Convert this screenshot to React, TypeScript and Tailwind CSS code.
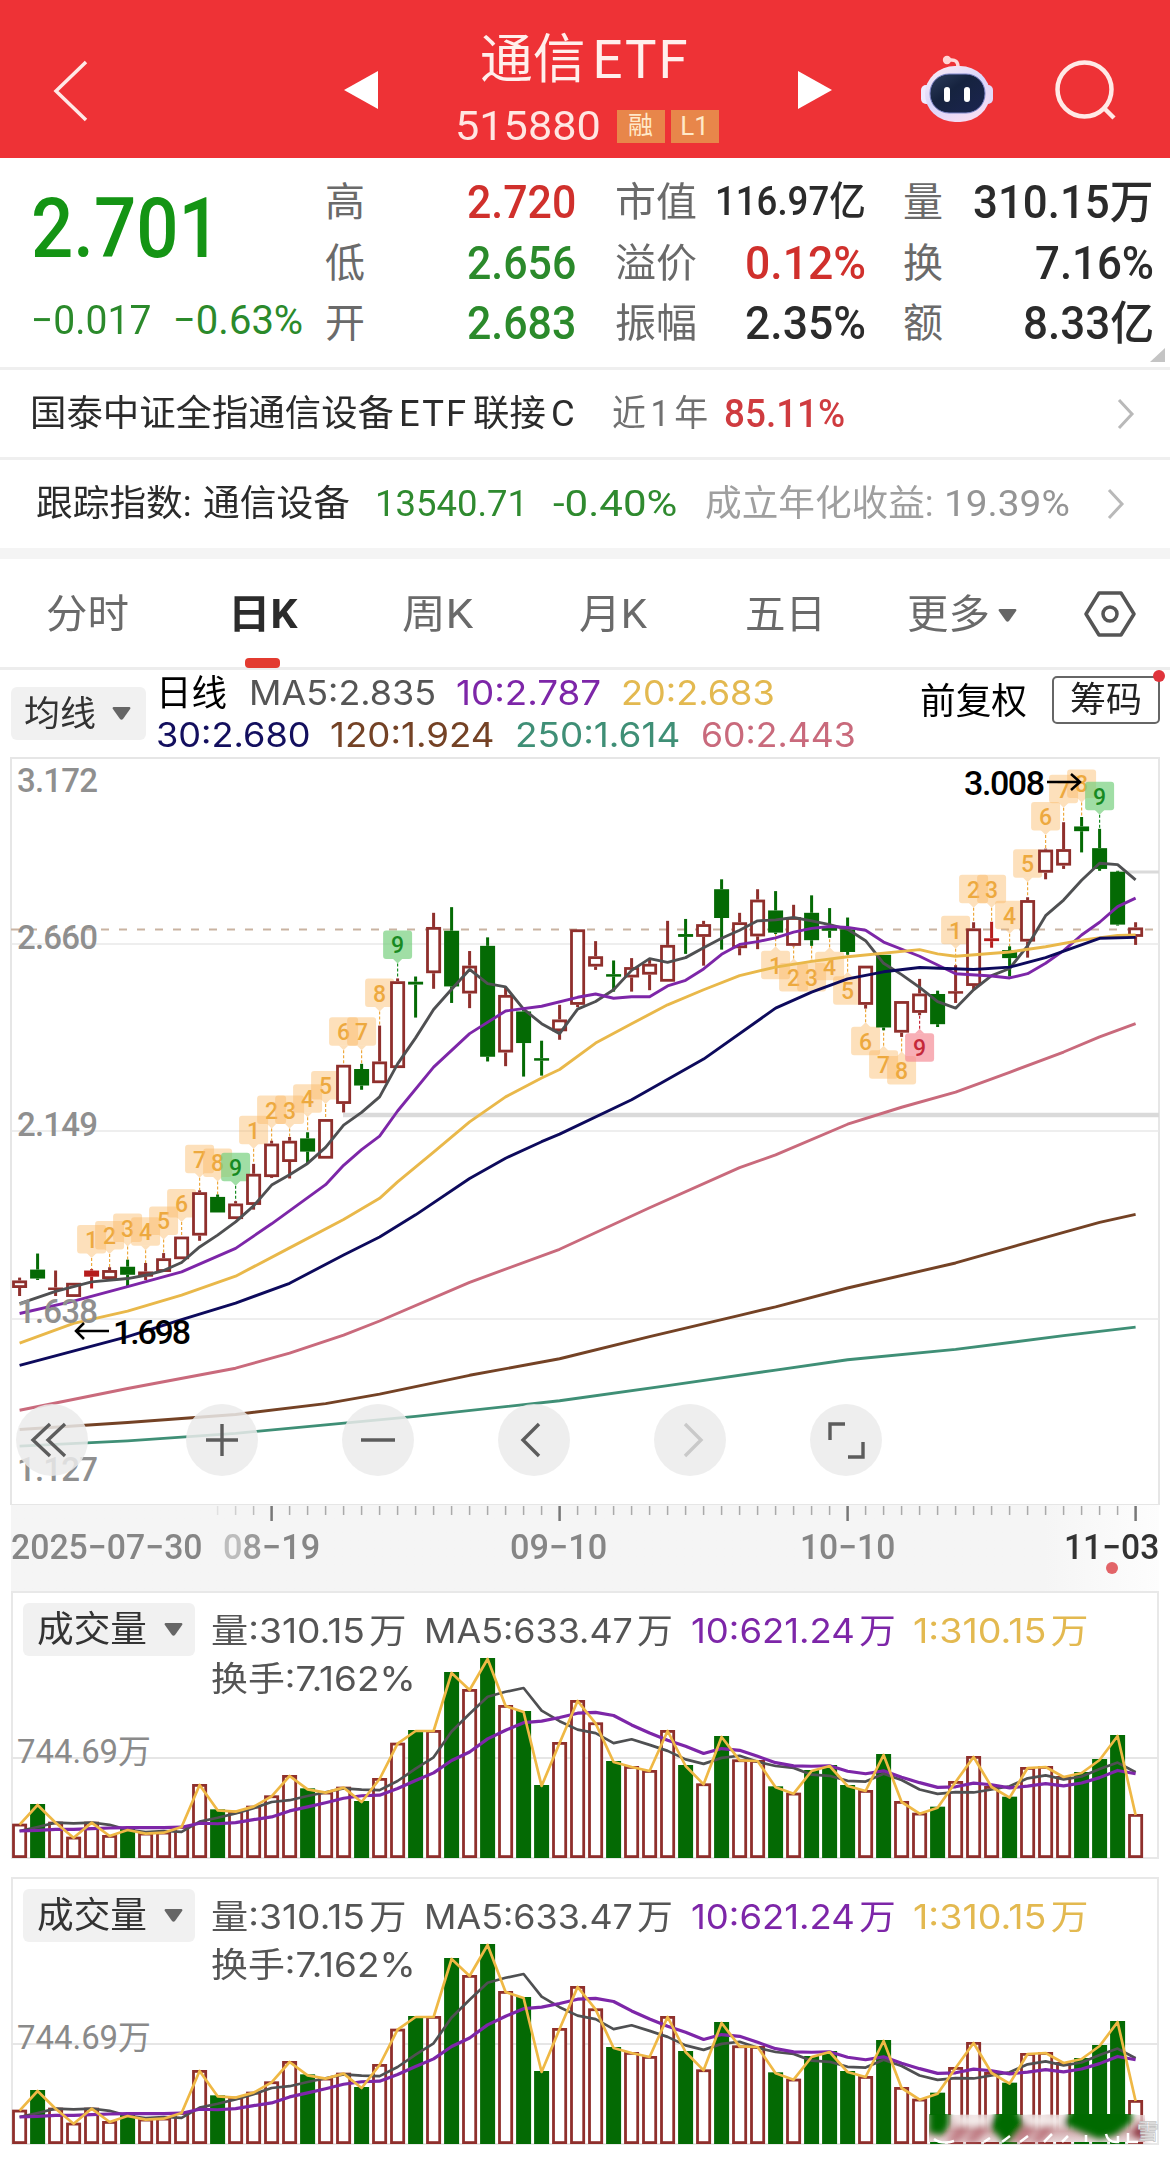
import { useLayoutEffect, useRef, useState } from "react";
import type { ReactNode } from "react";
import clsx from "clsx";

const STEP = 18;
const X0 = 19.6;
const GREEN = "#046a04";
const RED = "#8f2f2c";

const cx = (i: number) => X0 + i * STEP;
// price data is kept in plot units, one pixel is 2.119 of them
const py = (v: number) => v / 2.119 - 7;

// kind, body top, body bottom, high, low
type Candle = ["r" | "g" | "R", number, number, number, number];

const candles: Candle[] = [
  ["r", 1124, 1140, 1118, 1157],
  ["g", 1101, 1120, 1067, 1123],
  ["r", 1139, 1142, 1103, 1157],
  ["r", 1129, 1159, 1129, 1159],
  ["R", 1103, 1116, 1100, 1141],
  ["r", 1102, 1121, 1096, 1124],
  ["g", 1095, 1112, 1080, 1137],
  ["r", 1105, 1116, 1087, 1123],
  ["r", 1077, 1106, 1066, 1106],
  ["r", 1031, 1079, 1031, 1079],
  ["r", 937, 1029, 933, 1040],
  ["g", 947, 980, 942, 980],
  ["r", 961, 994, 956, 994],
  ["r", 898, 964, 877, 974],
  ["r", 834, 905, 828, 907],
  ["r", 828, 873, 820, 908],
  ["g", 823, 851, 810, 876],
  ["r", 782, 866, 782, 866],
  ["r", 667, 750, 667, 768],
  ["g", 676, 711, 665, 720],
  ["r", 660, 706, 584, 706],
  ["r", 490, 674, 484, 674],
  ["g", 491, 497, 480, 567],
  ["r", 375, 473, 345, 506],
  ["g", 383, 501, 333, 536],
  ["r", 457, 516, 426, 547],
  ["g", 415, 650, 397, 660],
  ["r", 519, 641, 503, 670],
  ["g", 554, 621, 550, 692],
  ["g", 653, 658, 616, 690],
  ["r", 571, 596, 540, 614],
  ["r", 380, 540, 380, 545],
  ["r", 437, 459, 405, 466],
  ["g", 475, 480, 446, 512],
  ["r", 460, 482, 441, 512],
  ["r", 453, 476, 443, 509],
  ["r", 413, 491, 362, 491],
  ["g", 390, 396, 358, 432],
  ["r", 369, 396, 362, 457],
  ["g", 295, 356, 274, 423],
  ["r", 365, 420, 345, 435],
  ["r", 317, 395, 295, 422],
  ["g", 340, 387, 299, 390],
  ["r", 354, 415, 328, 416],
  ["g", 345, 403, 308, 415],
  ["g", 377, 383, 335, 398],
  ["g", 380, 428, 355, 434],
  ["r", 457, 540, 457, 548],
  ["g", 434, 588, 434, 594],
  ["r", 532, 599, 532, 608],
  ["r", 516, 557, 485, 562],
  ["g", 517, 581, 510, 587],
  ["r", 511, 515, 456, 536],
  ["r", 378, 500, 365, 508],
  ["R", 399, 405, 364, 419],
  ["g", 424, 441, 416, 480],
  ["r", 318, 406, 312, 440],
  ["r", 211, 260, 209, 274],
  ["r", 210, 245, 153, 252],
  ["g", 162, 172, 142, 217],
  ["g", 208, 252, 167, 256],
  ["g", 258, 370, 256, 372],
  ["r", 376, 396, 365, 413],
];

const averages: { color: string; pts: number[][] }[] = [
  {
    color: "#4f5052",
    pts: [[0, 1173], [2, 1147], [4, 1127], [6, 1120], [7, 1113], [8, 1103], [9, 1086], [10, 1053], [11, 1028], [12, 1000], [13, 966], [14, 922], [15, 900], [16, 876], [17, 842], [18, 795], [19, 768], [20, 735], [21, 665], [22, 610], [23, 550], [24, 507], [25, 465], [26, 495], [27, 502], [28, 549], [29, 580], [30, 601], [31, 549], [32, 533], [33, 508], [34, 467], [35, 442], [36, 450], [37, 440], [38, 419], [39, 399], [40, 382], [41, 362], [42, 360], [43, 355], [44, 362], [45, 370], [46, 380], [47, 404], [48, 452], [49, 476], [50, 503], [51, 533], [52, 547], [53, 508], [54, 478], [55, 463], [56, 415], [57, 351], [58, 318], [59, 276], [60, 240], [61, 243], [62, 275]],
  },
  {
    color: "#7d26a8",
    pts: [[0, 1194], [3, 1168], [6, 1137], [9, 1106], [12, 1056], [14, 1004], [17, 921], [18, 880], [19, 847], [20, 818], [21, 765], [23, 672], [25, 601], [27, 553], [29, 543], [31, 524], [32, 517], [33, 526], [34, 523], [35, 523], [36, 500], [37, 488], [38, 464], [39, 433], [40, 412], [41, 406], [42, 398], [43, 386], [44, 378], [45, 374], [46, 376], [47, 382], [48, 407], [50, 437], [52, 474], [54, 479], [55, 483], [56, 474], [57, 452], [58, 425], [59, 392], [60, 365], [61, 332], [62, 314]],
  },
  {
    color: "#e9b84a",
    pts: [[0, 1257], [3, 1215], [6, 1189], [9, 1155], [12, 1115], [15, 1055], [18, 995], [20, 950], [21, 915], [23, 852], [25, 788], [27, 735], [29, 695], [30, 677], [32, 621], [34, 580], [36, 540], [38, 508], [40, 478], [42, 460], [44, 448], [46, 438], [50, 423], [51, 432], [52, 437], [55, 428], [57, 417], [59, 403], [61, 393], [62, 392]],
  },
  {
    color: "#0d0a5c",
    pts: [[0, 1304], [6, 1243], [9, 1207], [12, 1172], [15, 1130], [18, 1070], [20, 1032], [22, 985], [25, 908], [27, 865], [29, 830], [30, 814], [34, 741], [38, 655], [42, 547], [44, 513], [46, 485], [48, 470], [50, 461], [53, 465], [55, 460], [57, 440], [60, 399], [62, 397]],
  },
  {
    color: "#c96a7c",
    pts: [[0, 1399], [6, 1353], [12, 1310], [15, 1278], [18, 1240], [20, 1210], [25, 1128], [30, 1058], [35, 970], [40, 885], [42, 858], [46, 793], [49, 757], [52, 725], [55, 683], [58, 640], [60, 608], [62, 580]],
  },
  {
    color: "#744225",
    pts: [[0, 1440], [6, 1425], [12, 1408], [17, 1385], [20, 1365], [25, 1325], [30, 1290], [35, 1243], [40, 1198], [42, 1180], [46, 1140], [52, 1087], [58, 1022], [60, 1001], [62, 984]],
  },
  {
    color: "#3f8f76",
    pts: [[0, 1475], [6, 1464], [12, 1448], [17, 1430], [22, 1412], [30, 1379], [36, 1347], [42, 1314], [46, 1292], [52, 1270], [58, 1241], [62, 1223]],
  },
];

// candle index, text, centre, side of the candle
const marks: [number, string, number, "up" | "down"][] = [
  [4, "1", 1037, "up"],
  [5, "2", 1029, "up"],
  [6, "3", 1013, "up"],
  [7, "4", 1021, "up"],
  [8, "5", 998, "up"],
  [9, "6", 961, "up"],
  [10, "7", 867, "up"],
  [11, "8", 875, "up"],
  [12, "9", 884, "up"],
  [13, "1", 806, "up"],
  [14, "2", 763, "up"],
  [15, "3", 763, "up"],
  [16, "4", 739, "up"],
  [17, "5", 711, "up"],
  [18, "6", 597, "up"],
  [19, "7", 597, "up"],
  [20, "8", 515, "up"],
  [21, "9", 413, "up"],
  [42, "1", 456, "down"],
  [43, "2", 482, "down"],
  [44, "3", 482, "down"],
  [45, "4", 458, "down"],
  [46, "5", 510, "down"],
  [47, "6", 617, "down"],
  [48, "7", 667, "down"],
  [49, "8", 679, "down"],
  [50, "9", 631, "down"],
  [52, "1", 382, "up"],
  [53, "2", 295, "up"],
  [54, "3", 295, "up"],
  [55, "4", 350, "up"],
  [56, "5", 241, "up"],
  [57, "6", 141, "up"],
  [58, "7", 83, "up"],
  [59, "8", 72, "up"],
  [60, "9", 98, "up"],
];

// distance from the plot top, three units to a pixel
const volume = [
  521, 462, 515, 560, 515, 555, 537, 548, 545, 528, 402, 478, 482, 467, 436, 375,
  415, 425, 410, 453, 384, 278, 240, 240, 66, 117, 24, 165, 183, 405, 276, 150,
  217, 333, 348, 360, 240, 345, 400, 258, 328, 330, 409, 428, 360, 345, 405, 420,
  312, 453, 488, 470, 393, 318, 408, 440, 351, 348, 378, 366, 327, 255, 492,
];
const volumeGreen = [1, 6, 11, 16, 19, 22, 24, 26, 28, 29, 33, 37, 39, 42, 44, 45, 46, 48, 51, 55, 59, 60, 61];
const ma5Head = [540, 528, 515, 517];
const ma10Head = [540, 538, 535, 535, 533, 531, 530, 530, 530];

const vy = (v: number) => 59 + v / 3;

function movingAverage(n: number, head: number[]) {
  return volume.map((_, i) =>
    i < n - 1 ? head[i] : volume.slice(i - n + 1, i + 1).reduce((a, b) => a + b, 0) / n
  );
}

const line = (ys: number[]) => ys.map((v, i) => `${cx(i)},${vy(v) + 1}`).join(" ");

// squeezes or stretches its text to a fixed width
function Fit({ w, className, children }: { w: number; className?: string; children: ReactNode }) {
  const ref = useRef<HTMLSpanElement>(null);
  const [scale, setScale] = useState(1);

  useLayoutEffect(() => {
    if (ref.current) setScale(w / ref.current.offsetWidth);
  }, [w]);

  return (
    <span className={clsx("block shrink-0 whitespace-nowrap", className)} style={{ width: w }}>
      <span ref={ref} className="inline-block origin-left" style={{ transform: `scaleX(${scale})` }}>
        {children}
      </span>
    </span>
  );
}

function Caret({ className }: { className?: string }) {
  return (
    <svg className={clsx("shrink-0", className)} width="19" height="13" viewBox="0 0 19 13">
      <path d="M1.5 0h16q1.500 .6 .6 2L11 12q-1.500 1.500-3 0L.9 2Q0 .6 1.500 0z" fill="#666" />
    </svg>
  );
}

function Robot() {
  return (
    <svg width="74" height="70" viewBox="0 0 74 70" className="absolute left-[920px] top-[54px]">
      <defs>
        <linearGradient id="shell" x1="0" y1="0" x2=".6" y2="1">
          <stop offset="0" stopColor="#ffeef4" />
          <stop offset=".55" stopColor="#d9d6fb" />
          <stop offset="1" stopColor="#f5dcf3" />
        </linearGradient>
        <linearGradient id="face" x1="0" y1="0" x2="1" y2="1">
          <stop offset="0" stopColor="#2d3d5c" />
          <stop offset=".4" stopColor="#16233f" />
          <stop offset="1" stopColor="#1b2450" />
        </linearGradient>
      </defs>
      <path d="M38 13q0-8-8-7" fill="none" stroke="#ffd9d9" strokeWidth="3.500" />
      <circle cx="27" cy="6" r="4.200" fill="#ffd5d5" />
      <rect x="1" y="31" width="12" height="19" rx="5" fill="#efeaff" />
      <rect x="61" y="31" width="12" height="19" rx="5" fill="#e2d8f8" />
      <rect x="5" y="12" width="65" height="56" rx="30" fill="url(#shell)" />
      <rect x="10" y="20" width="55" height="39" rx="19" fill="url(#face)" stroke="#7f86c9" strokeWidth="1" />
      <rect x="24" y="33" width="6" height="15" rx="3" fill="#fff" />
      <rect x="44" y="33" width="6" height="15" rx="3" fill="#fff" />
    </svg>
  );
}

function Header() {
  return (
    <header className="relative h-[158px] bg-[#ee3236] text-white">
      <svg width="1170" height="158" className="absolute left-0 top-0" fill="none">
        <path d="M86 62L56 91l30 29" stroke="#ffe9e6" strokeWidth="3.500" />
        <path d="M378 71v38l-34-19z" fill="#fff" />
        <path d="M798 71v38l34-19z" fill="#fff" />
        <circle cx="1084.500" cy="89.500" r="27" stroke="#ffe9e6" strokeWidth="4.500" />
        <path d="M1103 107l11 11" stroke="#ffe9e6" strokeWidth="4.500" />
      </svg>
      <Robot />
      <div className="flex flex-col items-center pt-[28px]">
        <Fit w={210} className="text-[53px] leading-[64px] text-[#ffefec]">
          通信<span className="ml-[7px] tracking-[2px]">ETF</span>
        </Fit>
        <div className="flex items-center h-[68px] pl-[3px]">
          <Fit w={146} className="text-[40px] leading-[69px] text-[#ffe6e2]">
            515880
          </Fit>
          <span className="ml-[16px] w-[48px] h-[33px] bg-[#e8864a] text-[25px] leading-[32px] text-center text-[#ffe9c9]">
            融
          </span>
          <span className="ml-[6px] w-[48px] h-[33px] bg-[#e8864a] text-[26px] leading-[33px] text-center text-[#ffe9c9]">
            L1
          </span>
        </div>
      </div>
    </header>
  );
}

function StatRow({ label, labelW, children }: { label: string; labelW: number; children: ReactNode }) {
  return (
    <div className="flex items-center justify-between h-[60.5px]">
      <Fit w={labelW} className="pt-[2px] text-[40px] font-normal text-[#6a6a6a]">
        {label}
      </Fit>
      {children}
    </div>
  );
}

function Quote() {
  return (
    <section className="relative flex h-[212px] border-b-3 border-[#efefef] pt-[14px] text-[46px] font-medium text-[#2b2b2b]">
      <div className="ml-[31px] w-[294px] text-[#149414]">
        <Fit w={190} className="h-[110px] text-[83px] leading-[114px]">
          2.701
        </Fit>
        <div className="flex mt-[8px] text-[40px] leading-[62px] font-normal text-[#2b8a2b]">
          <Fit w={120}>−0.017</Fit>
          <Fit w={130} className="ml-[22px]">
            −0.63%
          </Fit>
        </div>
      </div>
      <div className="w-[251px] leading-[60px]">
        <StatRow label="高" labelW={40}>
          <Fit w={109} className="text-[#d0302c]">2.720</Fit>
        </StatRow>
        <StatRow label="低" labelW={40}>
          <Fit w={109} className="text-[#2b8a2b]">2.656</Fit>
        </StatRow>
        <StatRow label="开" labelW={40}>
          <Fit w={109} className="text-[#2b8a2b]">2.683</Fit>
        </StatRow>
      </div>
      <div className="ml-[39px] w-[251px] leading-[60px]">
        <StatRow label="市值" labelW={82}>
          <Fit w={151} className="text-[40px]">116.97亿</Fit>
        </StatRow>
        <StatRow label="溢价" labelW={82}>
          <Fit w={121} className="text-[#d0302c]">0.12%</Fit>
        </StatRow>
        <StatRow label="振幅" labelW={82}>
          <Fit w={121}>2.35%</Fit>
        </StatRow>
      </div>
      <div className="ml-[37px] w-[251px] leading-[60px]">
        <StatRow label="量" labelW={40}>
          <Fit w={181}>310.15万</Fit>
        </StatRow>
        <StatRow label="换" labelW={40}>
          <Fit w={119}>7.16%</Fit>
        </StatRow>
        <StatRow label="额" labelW={40}>
          <Fit w={131}>8.33亿</Fit>
        </StatRow>
      </div>
      <svg width="15" height="14" className="absolute left-[1150px] top-[190px]">
        <path d="M15 0v14H0z" fill="#c4c4c4" />
      </svg>
    </section>
  );
}

function Arrow({ className }: { className: string }) {
  return (
    <svg width="18" height="32" viewBox="0 0 18 32" fill="none" className={className}>
      <path d="M2 2l13 14L2 30" stroke="#b9b9b9" strokeWidth="3" />
    </svg>
  );
}

function FundRows() {
  return (
    <section className="text-[36px] text-[#2b2b2b]">
      <div className="flex items-center h-[90px] border-b-3 border-[#efefef] pl-[30px] leading-[88px]">
        <Fit w={545}>
          国泰中证全指通信设备<span className="mx-[5px] tracking-[2px]">ETF</span>联接
          <span className="ml-[5px]">C</span>
        </Fit>
        <Fit w={96} className="ml-[37px] text-[#707070]">
          近<span className="mx-[5px]">1</span>年
        </Fit>
        <Fit w={121} className="ml-[16px] text-[39px] font-medium text-[#cf3b3f]">85.11%</Fit>
        <Arrow className="ml-[272px]" />
      </div>
      <div className="flex items-center h-[88px] pl-[36px] leading-[88px]">
        <Fit w={156}>跟踪指数:</Fit>
        <Fit w={147} className="ml-[11px]">通信设备</Fit>
        <Fit w={153} className="ml-[25px] text-[#2f8a2f]">13540.71</Fit>
        <Fit w={125} className="ml-[25px] text-[#2f8a2f]">-0.40%</Fit>
        <Fit w={229} className="ml-[27px] text-[#9f9f9f]">成立年化收益:</Fit>
        <Fit w={126} className="ml-[10px] text-[#959595]">19.39%</Fit>
        <Arrow className="ml-[37px]" />
      </div>
      <div className="h-[11px] bg-[#f4f4f4]" />
    </section>
  );
}

function Tabs() {
  return (
    <nav className="relative flex items-center h-[111px] border-b-3 border-[#ededed] pl-[46px] pt-[4px] text-[40px] leading-[62px] text-[#6a6a6a]">
      <Fit w={83}>分时</Fit>
      <Fit w={69} className="ml-[99px] font-bold text-[#2b2b2b]">日K</Fit>
      <Fit w={71} className="ml-[105px]">周K</Fit>
      <Fit w={68} className="ml-[106px]">月K</Fit>
      <Fit w={81} className="ml-[98px]">五日</Fit>
      <Fit w={83} className="ml-[81px]">更多</Fit>
      <Caret className="ml-[8px]" />
      <svg width="52" height="46" viewBox="0 0 52 46" fill="none" stroke="#555" strokeWidth="3.500" className="ml-[67px] mb-[2px]">
        <path d="M15 2h22l13 21-13 21H15L2 23z" strokeLinejoin="round" />
        <circle cx="26" cy="23" r="7" />
      </svg>
      <span className="absolute left-[245px] bottom-[-1px] w-[35px] h-[10px] rounded-[4px] bg-[#e33b30]" />
    </nav>
  );
}

function Legend() {
  return (
    <section className="flex h-[87px] text-[34px]">
      <div className="flex items-center mt-[17px] ml-[11px] w-[135px] h-[53px] rounded-[6px] bg-[#f1f1f1] pl-[13px]">
        <Fit w={72} className="pt-[2px] text-[35px] leading-[53px] text-[#333]">均线</Fit>
        <Caret className="ml-[16px]" />
      </div>
      <div className="ml-[10px] w-[721px] font-[Inter,'Noto_Sans_CJK_SC',sans-serif] leading-[42px]">
        <div className="flex items-center mt-[2px] h-[42px]">
          <Fit w={71} className="text-[36px] text-black">日线</Fit>
          <Fit w={187} className="ml-[22px] text-[#555]">MA5:2.835</Fit>
          <Fit w={145} className="ml-[20px] text-[#7d26a8]">10:2.787</Fit>
          <Fit w={154} className="ml-[20px] text-[#e3b950]">20:2.683</Fit>
        </div>
        <div className="flex items-center h-[41px]">
          <Fit w={154} className="text-[#130f5e]">30:2.680</Fit>
          <Fit w={164} className="ml-[20px] text-[#744225]">120:1.924</Fit>
          <Fit w={165} className="ml-[21px] text-[#3f8f76]">250:1.614</Fit>
          <Fit w={155} className="ml-[21px] text-[#c96a7c]">60:2.443</Fit>
        </div>
      </div>
      <Fit w={107} className="mt-[5px] ml-[43px] text-[36px] leading-[54px] text-black">前复权</Fit>
      <div className="relative ml-[25px] mt-[6px] w-[108px] h-[48px] rounded-[5px] border-2 border-[#666] pl-[16px] text-[35px] leading-[45px] text-[#222]">
        <Fit w={72}>筹码</Fit>
        <span className="absolute right-[-7px] top-[-8px] size-[12px] rounded-full bg-[#e0343c]" />
      </div>
    </section>
  );
}

function CandleShape({ data, i }: { data: Candle; i: number }) {
  const [kind, top, bottom, high, low] = data;
  const x = cx(i);
  const t = py(top);
  const b = py(bottom);
  const color = kind === "g" ? GREEN : kind === "R" ? "#b51c1c" : RED;
  const hollow = kind === "r" && bottom - top > 12;
  return (
    <g>
      <rect x={x - 1.5} y={py(high)} width="3" height={Math.max(0, t - py(high))} fill={color} />
      <rect x={x - 1.5} y={b} width="3" height={Math.max(0, py(low) - b)} fill={color} />
      {hollow ? (
        <rect x={x - 6.1} y={t + 1.4} width="12.200" height={b - t - 2.800} fill="#fff" stroke={color} strokeWidth="2.800" />
      ) : (
        <rect x={x - 7.5} y={t} width="15" height={Math.max(2.5, b - t)} fill={color} />
      )}
    </g>
  );
}

function Mark({ i, text, y, side }: { i: number; text: string; y: number; side: "up" | "down" }) {
  const x = cx(i);
  const c = py(y);
  const tip = side === "up" ? c + 13.5 : c - 14;
  const d = side === "up" ? 5 : -5;
  const candle = candles[i];
  const wick = side === "up" ? py(candle[3]) : py(candle[4]);
  let fill = "#fbb863";
  let ink = "#eda93f";
  if (text === "9") {
    fill = side === "up" ? "#74cf7c" : "#f58a95";
    ink = side === "up" ? "#188a22" : "#c5283a";
  }
  return (
    <g>
      <line x1={x} x2={x} y1={tip + d} y2={wick} stroke={ink} strokeWidth="1.200" strokeDasharray="3 2" />
      <g fill={fill} opacity={text === "9" ? 0.68 : 0.43}>
        <rect x={x - 14.5} y={c - 14.5} width="29" height="28.500" rx="3" />
        <path d={`M${x - 5} ${tip}h10l-5 ${d}z`} />
      </g>
      <text x={x} y={c + 8.5} textAnchor="middle" fontSize="23" fill={ink} fontWeight="500">
        {text}
      </text>
    </g>
  );
}

const controls = [52, 222, 377.5, 534, 690, 846];

function ControlIcon({ n }: { n: number }) {
  const d = [
    "M-2 -16l-17 16 17 16M13 -16L-4 0l17 16",
    "M-16 0h32M0 -16v32",
    "M-17 0h34",
    "M5 -16L-11 0 5 16",
    "M-5 -16L11 0-5 16",
    "M-16 0v-16h15M17 2v15H2",
  ][n];
  return (
    <svg width="72" height="72" viewBox="-36 -36 72 72" fill="none">
      <path d={d} stroke={n === 4 ? "#c9c9c9" : "#5c5c5c"} strokeWidth="3.400" />
    </svg>
  );
}

const axis = [
  ["3.172", 35],
  ["2.660", 192],
  ["2.149", 379],
  ["1.638", 566],
  ["1.127", 724],
] as const;

function PriceChart() {
  return (
    <section className="relative h-[748px]">
      <svg width="1170" height="748" className="block">
        <rect x="11" y="1" width="1148" height="747" fill="none" stroke="#e6e6e6" strokeWidth="2" />
        {[187, 374, 562].map((y) => (
          <line key={y} x1="11" x2="1159" y1={y} y2={y} stroke="#e9e9e9" strokeWidth="1.500" />
        ))}
        <line x1="343" x2="1159" y1="358" y2="358" stroke="#dadada" strokeWidth="4.500" />
        <line x1="1118" x2="1159" y1="115" y2="115" stroke="#dadada" strokeWidth="3" />
        <line x1="11" x2="1159" y1="172.500" y2="172.500" stroke="#c9b3a1" strokeWidth="1.800" strokeDasharray="8 10" />
        {marks.map(([i, text, y, side]) => (
          <Mark key={i} i={i} text={text} y={y} side={side} />
        ))}
        {candles.map((c, i) => (
          <CandleShape key={i} data={c} i={i} />
        ))}
        {averages.map((a) => (
          <polyline
            key={a.color}
            points={a.pts.map(([i, v]) => `${cx(i)},${py(v)}`).join(" ")}
            fill="none"
            stroke={a.color}
            strokeWidth="2.900"
            strokeLinejoin="round"
          />
        ))}
        {axis.map(([label, y]) => (
          <text key={label} x="17" y={y} fontSize="33" textLength="81" fill="#8f8f8f" fontWeight="500">
            {label}
          </text>
        ))}
        <g stroke="#000" strokeWidth="2.500" fill="none">
          <path d="M84 566l-8 8 8 8M76 574h33" />
          <path d="M1071 17l9 8-9 8M1047 25h33" />
        </g>
        <text x="113" y="587" fontSize="34" textLength="78" fontWeight="500">
          1.698
        </text>
        <text x="964" y="38" fontSize="34" textLength="81" fontWeight="500">
          3.008
        </text>
      </svg>
      {controls.map((x, n) => (
        <button
          key={x}
          className="absolute top-[647px] size-[72px] -translate-x-1/2 rounded-full bg-[#ebebeb]/85"
          style={{ left: x }}
        >
          <ControlIcon n={n} />
        </button>
      ))}
    </section>
  );
}

function DateAxis() {
  return (
    <section className="relative h-[86px] mx-[11px] bg-linear-to-r from-[#f5f5f5] from-90% to-[#fdfdfd]">
      <svg width="1148" height="20" viewBox="11 0 1148 20" className="block">
        {candles.map((_, i) => {
          const major = i % 16 === 14;
          if (i < 11) return null;
          return (
            <line
              key={i}
              x1={cx(i)}
              x2={cx(i)}
              y1="1"
              y2={major ? 16 : 10}
              stroke={major ? "#777" : "#aaa"}
              strokeWidth={major ? 2.5 : 1.5}
              opacity={i < 14 ? (i - 10) / 4 : 1}
            />
          );
        })}
      </svg>
      <div className="flex text-[35px] leading-[46px] font-medium text-[#868686]">
        <Fit w={192}>2025−07−30</Fit>
        <Fit w={97} className="ml-[20px]">
          <span className="text-[#bdbdbd]">0</span>
          <span className="text-[#9a9a9a]">8</span>−19
        </Fit>
        <Fit w={97} className="ml-[190px]">09−10</Fit>
        <Fit w={95} className="ml-[193px]">10−10</Fit>
        <Fit w={95} className="ml-[169px] text-[#333]">11−03</Fit>
      </div>
      <span className="absolute left-[1095px] top-[57px] size-[12px] rounded-full bg-[#e26468]" />
    </section>
  );
}

function Watermark() {
  return (
    <g>
      <defs>
        <filter id="smear" x="-10%" y="-40%" width="120%" height="180%">
          <feGaussianBlur stdDeviation="3" />
        </filter>
        <clipPath id="strip">
          <rect x="929" y="237" width="230" height="30" />
        </clipPath>
        <linearGradient id="haze" x1="0" y1="0" x2="0" y2="1">
          <stop offset="0" stopColor="#ecdcdc" stopOpacity=".75" />
          <stop offset=".6" stopColor="#d3abae" />
          <stop offset="1" stopColor="#e9d9da" />
        </linearGradient>
      </defs>
      <g clipPath="url(#strip)">
        <rect x="929" y="238" width="216" height="27" fill="url(#haze)" />
        <g filter="url(#smear)">
          {[965, 983, 1031, 1049].map((x) => (
            <path key={x} d={`M${x} 234l-4 12-16 20h14l12-18z`} fill="#b5656d" opacity=".7" />
          ))}
          <path d="M958 240h30v8h-30zM1028 240h34v8h-34z" fill="#f6f0ee" />
          <path d="M929 230h20v18l-6 10-14-2z" fill={GREEN} />
          <path d="M998 230h17l9 18-17 20-17-18z" fill={GREEN} />
          <path d="M1073 230h56l4 14-18 14-16 4-36-15z" fill={GREEN} />
          <path d="M1131 258l10-14 6 20z" fill="#8f3a45" />
        </g>
      </g>
      <path
        d="M934 262q8 6 20 2M984 265l6-4M1002 265l8-6M1020 265l8-6M1044 265l8-8M1062 265l6-6M1086 265v-7M1106 257q2 9 12 8v-6M1128 256v9h10"
        fill="none"
        stroke="#fff"
        strokeWidth="2.500"
      />
      <text x="1137" y="262" fontSize="22" fill="#fff" stroke="#c4c4c4" strokeWidth=".8">
        雪
      </text>
    </g>
  );
}

function VolumePanel({ marked }: { marked?: boolean }) {
  return (
    <section className="relative h-[268px] mx-[11px] border-2 border-[#e8e8e8]">
      <svg width="1170" height="268" className="absolute left-[-13px] top-[-2px]">
        <line x1="11" x2="1159" y1="167" y2="167" stroke="#e6e6e6" strokeWidth="2" />
        {volume.map((v, i) => {
          const green = volumeGreen.includes(i);
          const x = cx(i) - 7.5;
          return green ? (
            <rect key={i} x={x} y={vy(v)} width="15" height={267 - vy(v)} fill={GREEN} />
          ) : (
            <rect
              key={i}
              x={x + 1.4}
              y={vy(v) + 1.4}
              width="12.200"
              height={264.2 - vy(v)}
              fill="#fff"
              stroke={RED}
              strokeWidth="2.800"
            />
          );
        })}
        <g fill="none" strokeWidth="2.700" strokeLinejoin="round">
          <polyline points={line(movingAverage(5, ma5Head))} stroke="#4f5052" />
          <polyline points={line(movingAverage(10, ma10Head))} stroke="#7d26a8" strokeWidth="3.200" />
          <polyline points={line(volume)} stroke="#efb845" />
        </g>
        <text x="17" y="172" fontSize="33" textLength="134" lengthAdjust="spacingAndGlyphs" fill="#8a8a8a">
          744.69万
        </text>
        {marked && <Watermark />}
      </svg>
      <div className="relative flex pl-[10px] pt-[10px] text-[34px] text-[#555]">
        <div className="flex items-center w-[172px] h-[53px] rounded-[6px] bg-[#f1f1f1] pl-[14px]">
          <Fit w={110} className="pt-[2px] text-[36px] leading-[53px] text-[#333]">成交量</Fit>
          <Caret className="ml-[17px]" />
        </div>
        <div className="ml-[16px] font-[Inter,'Noto_Sans_CJK_SC',sans-serif] leading-[48px]">
          <div className="flex pt-[4px]">
            <Fit w={196}>
              量:310.15<span className="ml-[4px]">万</span>
            </Fit>
            <Fit w={249} className="ml-[17px]">
              MA5:633.47<span className="ml-[4px]">万</span>
            </Fit>
            <Fit w={205} className="ml-[18px] text-[#7d26a8]">
              10:621.24<span className="ml-[4px]">万</span>
            </Fit>
            <Fit w={175} className="ml-[17px] text-[#e3b950]">
              1:310.15<span className="ml-[4px]">万</span>
            </Fit>
          </div>
          <Fit w={205}>换手:7.162%</Fit>
        </div>
      </div>
    </section>
  );
}

export default function App() {
  return (
    <main className="w-[1170px] h-[2161px] overflow-hidden bg-white font-[Roboto,'Noto_Sans_CJK_SC',sans-serif]">
      <Header />
      <Quote />
      <FundRows />
      <Tabs />
      <Legend />
      <PriceChart />
      <DateAxis />
      <div className="flex flex-col gap-[18px]">
        <VolumePanel />
        <VolumePanel marked />
      </div>
    </main>
  );
}
